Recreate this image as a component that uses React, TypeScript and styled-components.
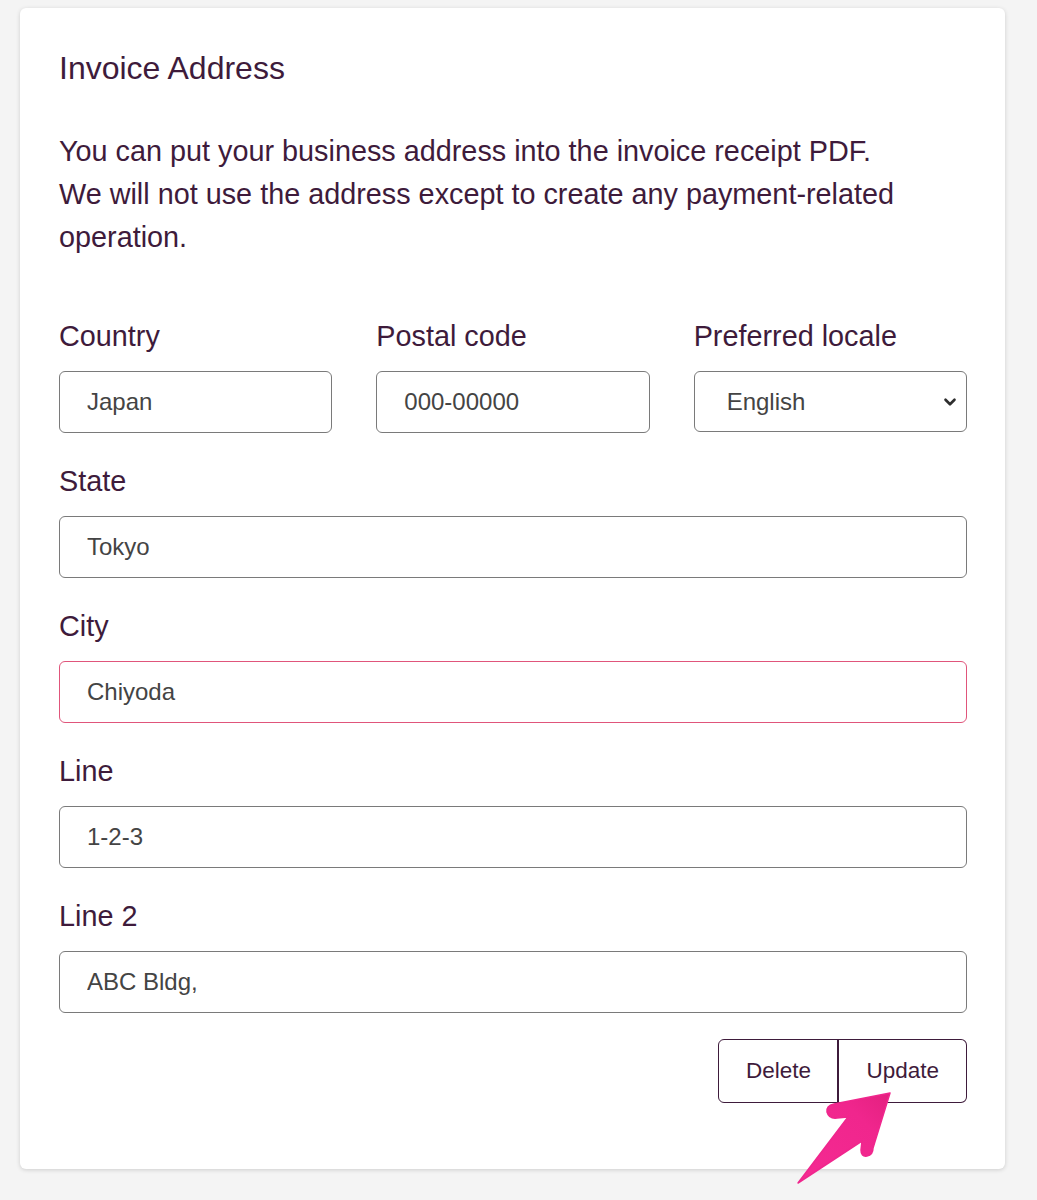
import React from "react"
import styled, { createGlobalStyle } from "styled-components"
import { ChevronDown } from "lucide-react"

const ink = "#3e1b3b"
const fieldBorder = "#7a7a7a"
const fieldText = "#444444"
const alertBorder = "#e0557b"

const GlobalStyle = createGlobalStyle`
  html, body {
    margin: 0;
    padding: 0;
    background: #f4f4f4;
    font-family: "Liberation Sans", Arial, sans-serif;
  }
  * {
    box-sizing: border-box;
  }
`

const Page = styled.div`
  position: relative;
  padding: 8px 32px 32px 20px;
  min-height: 1200px;
`

const Card = styled.section`
  width: 985px;
  background: #ffffff;
  border-radius: 6px;
  box-shadow: 0 1px 4px rgba(0, 0, 0, 0.16);
  padding: 40px 38px 66px 39px;
  color: ${ink};
`

const Title = styled.h2`
  margin: 0;
  font-size: 32px;
  font-weight: 400;
  line-height: 40px;
`

const Lead = styled.p`
  margin: 42px 0 0;
  font-size: 28.8px;
  line-height: 43px;
`

const Form = styled.form`
  margin-top: 57px;
  display: flex;
  flex-direction: column;
  gap: 28px;
`

const Row = styled.div`
  display: grid;
  grid-template-columns: repeat(3, 1fr);
  column-gap: 44px;
`

const Field = styled.label`
  display: flex;
  flex-direction: column;
  gap: 15px;
`

const LabelText = styled.span`
  font-size: 28.8px;
  line-height: 40px;
`

const Input = styled.input<{ $invalid?: boolean }>`
  width: 100%;
  height: 62px;
  padding: 0 27px;
  border: 1.5px solid ${(p) => (p.$invalid ? alertBorder : fieldBorder)};
  border-radius: 6px;
  background: #fff;
  font-family: inherit;
  font-size: 24px;
  color: ${fieldText};
  outline: none;
`

const SelectWrap = styled.div`
  position: relative;
`

const Select = styled.select`
  width: 100%;
  height: 61px;
  padding: 0 40px 0 32px;
  border: 1.5px solid ${fieldBorder};
  border-radius: 6px;
  background: #fff;
  font-family: inherit;
  font-size: 24px;
  color: ${fieldText};
  appearance: none;
  -webkit-appearance: none;
  outline: none;
`

const Chevron = styled(ChevronDown)`
  position: absolute;
  right: 8px;
  top: 50%;
  transform: translateY(-50%);
  color: #2e2e2e;
  pointer-events: none;
`

const Actions = styled.div`
  display: flex;
  justify-content: flex-end;
  margin-top: -2px;
`

const ButtonGroup = styled.div`
  display: flex;
`

const Button = styled.button`
  height: 64px;
  padding: 0 27px;
  background: #fff;
  border: 1.5px solid ${ink};
  font-family: inherit;
  font-size: 22.5px;
  color: ${ink};
  cursor: pointer;

  &:first-child {
    border-radius: 6px 0 0 6px;
  }
  &:last-child {
    border-radius: 0 6px 6px 0;
    border-left-width: 2px;
    margin-left: -1.5px;
  }
`

const Pointer = styled.svg`
  position: absolute;
  left: 790px;
  top: 1085px;
  pointer-events: none;
`

const ArrowMark = () => (
  <Pointer width="110" height="105" viewBox="790 1085 110 105">
    <defs>
      <linearGradient id="arrowFill" x1="0" y1="1" x2="1" y2="0">
        <stop offset="0" stopColor="#f52a92" />
        <stop offset="0.7" stopColor="#f0268d" />
        <stop offset="1" stopColor="#e3207f" />
      </linearGradient>
    </defs>
    <path
      d="M890,1093 L834,1104 Q826,1106 827,1112 Q829,1119 837,1118 L848,1117 L798,1183 L862,1141 L861,1150 Q861,1157 867,1156 Q873,1155 873,1148 Z"
      fill="url(#arrowFill)"
      stroke="#f0268d"
      strokeWidth="1.5"
      strokeLinejoin="round"
    />
  </Pointer>
)

export default function App() {
  return (
    <Page>
      <GlobalStyle />
      <Card>
        <Title>Invoice Address</Title>
        <Lead>
          You can put your business address into the invoice receipt PDF.
          <br />
          We will not use the address except to create any payment-related operation.
        </Lead>
        <Form onSubmit={(e) => e.preventDefault()}>
          <Row>
            <Field>
              <LabelText>Country</LabelText>
              <Input defaultValue="Japan" />
            </Field>
            <Field>
              <LabelText>Postal code</LabelText>
              <Input defaultValue="000-00000" />
            </Field>
            <Field>
              <LabelText>Preferred locale</LabelText>
              <SelectWrap>
                <Select defaultValue="en">
                  <option value="en">English</option>
                  <option value="ja">日本語</option>
                </Select>
                <Chevron size={18} strokeWidth={3.5} />
              </SelectWrap>
            </Field>
          </Row>
          <Field>
            <LabelText>State</LabelText>
            <Input defaultValue="Tokyo" />
          </Field>
          <Field>
            <LabelText>City</LabelText>
            <Input defaultValue="Chiyoda" $invalid />
          </Field>
          <Field>
            <LabelText>Line</LabelText>
            <Input defaultValue="1-2-3" />
          </Field>
          <Field>
            <LabelText>Line 2</LabelText>
            <Input defaultValue="ABC Bldg," />
          </Field>
          <Actions>
            <ButtonGroup>
              <Button type="button">Delete</Button>
              <Button type="submit">Update</Button>
            </ButtonGroup>
          </Actions>
        </Form>
      </Card>
      <ArrowMark />
    </Page>
  )
}
